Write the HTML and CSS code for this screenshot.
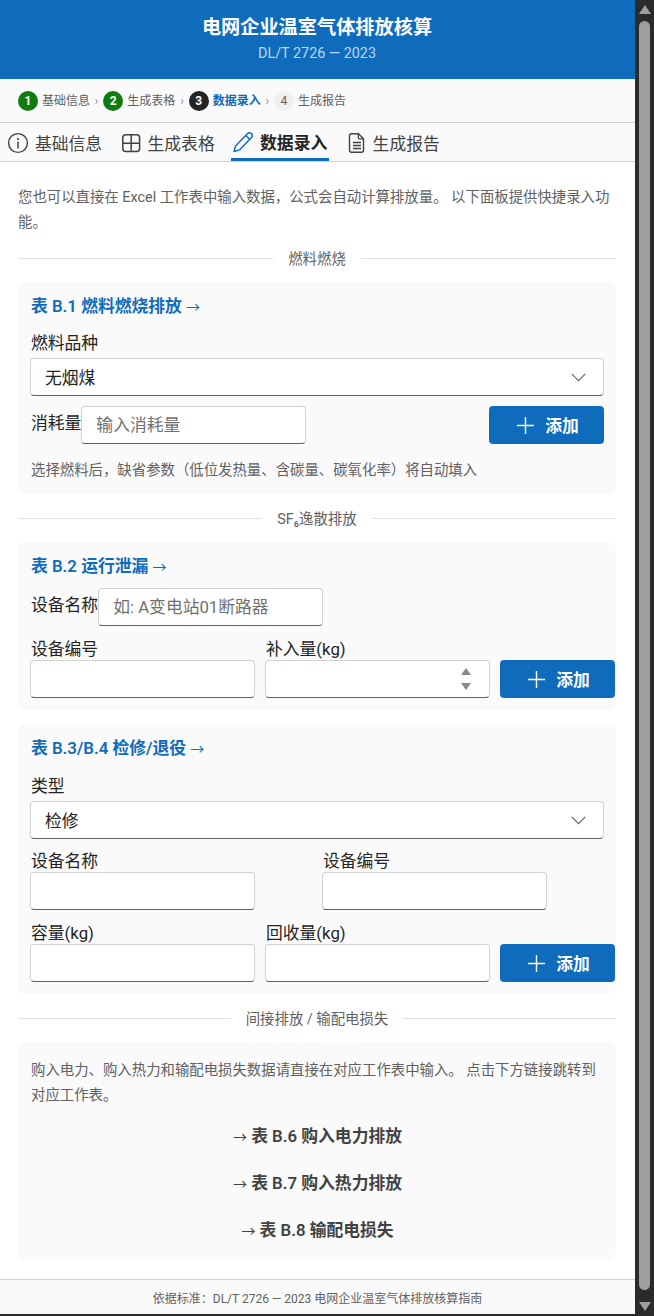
FILE: index.html
```html
<!DOCTYPE html>
<html lang="zh-CN">
<head>
<meta charset="utf-8">
<title>电网企业温室气体排放核算</title>
<link rel="stylesheet" href="styles.css">
</head>
<body>
<div class="window">
  <div class="app">
    <header class="header">
      <h1 class="title">电网企业温室气体排放核算</h1>
      <p class="subtitle">DL/T 2726 — 2023</p>
    </header>
    <nav class="stepper">
      <span class="dot dot-done">1</span><span class="step-label">基础信息</span><span class="step-sep">›</span>
      <span class="dot dot-done">2</span><span class="step-label">生成表格</span><span class="step-sep">›</span>
      <span class="dot dot-current">3</span><span class="step-label step-label-current">数据录入</span><span class="step-sep">›</span>
      <span class="dot dot-todo">4</span><span class="step-label">生成报告</span>
    </nav>
    <div class="tabs">
      <div class="tab">
        <svg class="tab-icon" viewBox="0 0 24 24"><circle cx="12" cy="12" r="9.4" fill="none" stroke="#424242" stroke-width="1.4"/><circle cx="12" cy="8" r="1.1" fill="#424242"/><path d="M12 11v6" stroke="#424242" stroke-width="1.5" stroke-linecap="round"/></svg>
        <span>基础信息</span>
      </div>
      <div class="tab">
        <svg class="tab-icon" viewBox="0 0 24 24"><rect x="3.8" y="3.800" width="16.8" height="16.800" rx="3" fill="none" stroke="#424242" stroke-width="1.5"/><path d="M12.200 3.800v16.800M3.800 12.200h16.800" stroke="#424242" stroke-width="1.5"/></svg>
        <span>生成表格</span>
      </div>
      <div class="tab tab-active">
        <svg class="tab-icon" viewBox="0 0 24 24"><path d="M3 21.500l1.600-5.600L16.600 3.600a2.700 2.700 0 0 1 3.900 0 2.700 2.700 0 0 1 0 3.900L8.500 19.900z" fill="none" stroke="#0f6cbd" stroke-width="1.500" stroke-linejoin="round"/><path d="M14.800 5.500l3.800 3.800" stroke="#0f6cbd" stroke-width="1.500"/></svg>
        <span>数据录入</span>
      </div>
      <div class="tab">
        <svg class="tab-icon" viewBox="0 0 24 24"><path d="M7.500 2.800h7l5 5v11.400a2 2 0 0 1-2 2h-10a2 2 0 0 1-2-2V4.800a2 2 0 0 1 2-2z" fill="none" stroke="#424242" stroke-width="1.400" stroke-linejoin="round"/><path d="M14.300 3v3.600a1.200 1.200 0 0 0 1.200 1.200h3.800M9 11.500h8M9 14.500h8M9 17.500h8" fill="none" stroke="#424242" stroke-width="1.300"/></svg>
        <span>生成报告</span>
      </div>
    </div>
    <main class="main">
      <p class="intro">您也可以直接在 Excel 工作表中输入数据，公式会自动计算排放量。 以下面板提供快捷录入功能。</p>

      <div class="divider"><span>燃料燃烧</span></div>

      <section class="panel">
        <h2 class="panel-title">表 B.1 燃料燃烧排放 <span class="arrow">→</span></h2>
        <label class="label">燃料品种</label>
        <div class="select"><span>无烟煤</span><svg class="chevron" viewBox="0 0 15 9"><path d="M.7.900l6.800 6.800L14.300.900" fill="none" stroke="#616161" stroke-width="1.100"/></svg></div>
        <div class="row row-between">
          <div class="inline-field">
            <label class="label inline-label">消耗量</label>
            <input class="input" placeholder="输入消耗量">
          </div>
          <button class="btn btn-flush"><svg class="plus" viewBox="0 0 20 20"><path d="M10 1v18M1 10h18" stroke="#fff" stroke-width="1.500"/></svg>添加</button>
        </div>
        <p class="hint">选择燃料后，缺省参数（低位发热量、含碳量、碳氧化率）将自动填入</p>
      </section>

      <div class="divider"><span>SF₆逸散排放</span></div>

      <section class="panel">
        <h2 class="panel-title panel-title-tight">表 B.2 运行泄漏 <span class="arrow">→</span></h2>
        <div class="inline-field">
          <label class="label inline-label">设备名称</label>
          <input class="input" placeholder="如: A变电站01断路器">
        </div>
        <div class="row row-gap">
          <div class="field"><label class="label">设备编号</label><input class="input"></div>
          <div class="field"><label class="label">补入量(kg)</label>
            <div class="number"><svg class="spin" viewBox="0 0 10 22"><path d="M5 0l5 7H0zM5 22l5-7H0z" fill="#8a8a8a"/></svg></div>
          </div>
          <button class="btn"><svg class="plus" viewBox="0 0 20 20"><path d="M10 1v18M1 10h18" stroke="#fff" stroke-width="1.500"/></svg>添加</button>
        </div>
      </section>

      <section class="panel">
        <h2 class="panel-title panel-title-wide">表 B.3/B.4 检修/退役 <span class="arrow">→</span></h2>
        <label class="label">类型</label>
        <div class="select"><span>检修</span><svg class="chevron" viewBox="0 0 15 9"><path d="M.7.900l6.800 6.800L14.300.900" fill="none" stroke="#616161" stroke-width="1.100"/></svg></div>
        <div class="two-col">
          <div class="field"><label class="label">设备名称</label><input class="input"></div>
          <div class="field"><label class="label">设备编号</label><input class="input"></div>
        </div>
        <div class="row row-gap">
          <div class="field"><label class="label">容量(kg)</label><input class="input"></div>
          <div class="field"><label class="label">回收量(kg)</label><input class="input"></div>
          <button class="btn"><svg class="plus" viewBox="0 0 20 20"><path d="M10 1v18M1 10h18" stroke="#fff" stroke-width="1.500"/></svg>添加</button>
        </div>
      </section>

      <div class="divider"><span>间接排放 / 输配电损失</span></div>

      <section class="panel panel-links">
        <p class="panel-text">购入电力、购入热力和输配电损失数据请直接在对应工作表中输入。 点击下方链接跳转到对应工作表。</p>
        <a class="jump"><span class="arrow">→</span> 表 B.6 购入电力排放</a>
        <a class="jump"><span class="arrow">→</span> 表 B.7 购入热力排放</a>
        <a class="jump"><span class="arrow">→</span> 表 B.8 输配电损失</a>
      </section>
    </main>
    <footer class="footer">依据标准：DL/T 2726 — 2023 电网企业温室气体排放核算指南</footer>
  </div>
  <aside class="scrollbar">
    <svg class="sb-arrow" viewBox="0 0 12 9"><path d="M6 0l6 9H0z" fill="#9e9e9e"/></svg>
    <div class="sb-thumb"></div>
    <svg class="sb-arrow" viewBox="0 0 12 9"><path d="M6 9l6-9H0z" fill="#9e9e9e"/></svg>
  </aside>
</div>
</body>
</html>
```
FILE: styles.css
```css
* { box-sizing: border-box; }
html, body { margin: 0; padding: 0; height: 100%; overflow: hidden; }
body {
  background: #2b2b2b;
  font-family: Roboto, "Noto Sans CJK SC", sans-serif;
  color: #242424;
}
h1, h2, p { margin: 0; }
.window { display: flex; height: 1316px; }
.app {
  width: 635px;
  height: 1314px;
  background: #fff;
  display: flex;
  flex-direction: column;
  overflow: hidden;
}
.header {
  height: 79px;
  flex: none;
  background: #0f6cbd;
  color: #fff;
  text-align: center;
  padding: 15px 1px 0 0;
}
.title { font-size: 19.2px; line-height: 26px; font-weight: 700; }
.subtitle { font-size: 14.4px; line-height: 20px; margin-top: 3px; color: #bcd6ef; }
.stepper {
  height: 44px;
  flex: none;
  display: flex;
  align-items: center;
  padding-left: 18px;
  background: #fafafa;
  border-bottom: 1px solid #d1d1d1;
}
.dot {
  width: 20px; height: 20px;
  border-radius: 50%;
  flex: none;
  display: flex; align-items: center; justify-content: center;
  font-size: 12px; font-weight: 700; color: #fff;
  margin-right: 4px;
}
.dot-done { background: #107c10; }
.dot-current { background: #242424; }
.dot-todo { background: #f0f0f0; color: #616161; font-weight: 400; }
.step-label { font-size: 12px; line-height: 16px; color: #616161; white-space: nowrap; }
.step-label-current { color: #0f6cbd; font-weight: 700; }
.step-sep { width: 13.3px; text-align: center; font-size: 12px; color: #8a8a8a; }
.tabs {
  height: 39px;
  flex: none;
  display: flex;
  gap: 14.4px;
  padding-left: 6px;
  background: #fafafa;
  border-bottom: 1px solid #d1d1d1;
}
.tab {
  display: flex;
  align-items: center;
  gap: 5px;
  height: 38px;
  padding-right: 2px;
  padding-top: 2px;
  font-size: 16.8px;
  color: #424242;
  white-space: nowrap;
}
.tab-active {
  font-weight: 700;
  color: #242424;
  border-bottom: 3px solid #0f6cbd;
  padding-top: 3px;
}
.tab-icon { width: 24px; height: 24px; flex: none; }
.main {
  flex: 1;
  min-height: 0;
  padding: 23px 19px 0 18px;
  display: flex;
  flex-direction: column;
  gap: 14px;
}
.intro { font-size: 14.4px; line-height: 25px; color: #616161; margin-bottom: -1px; }
.divider {
  height: 20px;
  flex: none;
  display: flex;
  align-items: center;
  gap: 15px;
  font-size: 14.4px;
  color: #616161;
}
.divider span { position: relative; top: -1px; }
.divider::before, .divider::after { content: ""; flex: 1; height: 1px; background: #e0e0e0; }
.panel {
  background: #fafafa;
  border-radius: 8px;
  padding: 13px 12px 12px;
  display: flex;
  flex-direction: column;
}
.panel-title {
  font-size: 16.8px;
  line-height: 23px;
  font-weight: 600;
  color: #0f6cbd;
  margin-bottom: 14px;
  padding-left: 1px;
}
.arrow { font-family: "Noto Sans CJK SC", sans-serif; font-size: 14px; font-weight: 400; }
.panel-title-tight { margin-bottom: 10px; }
.panel-title-wide { margin-bottom: 15px; }
.label { display: block; font-size: 16.8px; line-height: 22px; color: #242424; white-space: nowrap; padding-left: 1px; }
.select, .input, .number {
  height: 38px;
  background: #fff;
  border: 1px solid #d1d1d1;
  border-bottom-color: #616161;
  border-radius: 4px;
}
.select {
  display: flex;
  align-items: center;
  justify-content: space-between;
  margin-top: 4px;
  padding: 0 17px 0 14px;
  font-size: 16.8px;
}
.chevron { width: 15px; height: 9px; flex: none; }
.input {
  width: 225px;
  display: block;
  padding: 0 14px;
  font: inherit;
  font-size: 16.8px;
  outline: none;
}
.input::placeholder { color: #707070; opacity: 1; }
.row { display: flex; align-items: flex-end; }
.row-between { justify-content: space-between; margin-top: 10px; }
.row-gap { gap: 10px; margin-top: 12px; }
.inline-field { display: flex; align-items: flex-start; }
.inline-label { padding-top: 6px; }
.field { width: 225px; flex: none; }
.two-col { display: grid; grid-template-columns: 1fr 1fr; gap: 10px; margin-top: 11px; }
.number { display: flex; align-items: center; justify-content: flex-end; padding-right: 18px; }
.spin { width: 10px; height: 22px; }
.btn {
  width: 115px;
  height: 38px;
  flex: none;
  border: 0;
  border-radius: 4px;
  background: #0f6cbd;
  color: #fff;
  font: inherit;
  font-size: 16.8px;
  font-weight: 600;
  display: flex;
  align-items: center;
  justify-content: center;
  gap: 10px;
  padding: 0 0 0 2px;
}
.plus { width: 19px; height: 19px; }
.hint { margin-top: 17px; font-size: 14.4px; line-height: 20px; color: #616161; padding-bottom: 1px; padding-left: 1px; }
.panel-links { padding: 16px 12px 6px 13px; }
.panel-text { font-size: 14.4px; line-height: 25px; color: #616161; margin-bottom: 5px; }
.jump {
  display: block;
  height: 47px;
  line-height: 47px;
  text-align: center;
  font-size: 16.8px;
  font-weight: 600;
  color: #424242;
}
.footer {
  height: 35px;
  flex: none;
  border-top: 1px solid #d1d1d1;
  background: #fafafa;
  text-align: center;
  padding-top: 9px;
  font-size: 12px;
  line-height: 20px;
  color: #616161;
}
.scrollbar {
  width: 19px;
  flex: none;
  height: 1316px;
  display: flex;
  flex-direction: column;
  align-items: center;
  padding: 5px 0 5px;
}
.sb-arrow { width: 12px; height: 9px; flex: none; }
.sb-thumb { width: 11px; flex: 1; margin: 7px 0 12px; background: #9e9e9e; border-radius: 6px; }
```
